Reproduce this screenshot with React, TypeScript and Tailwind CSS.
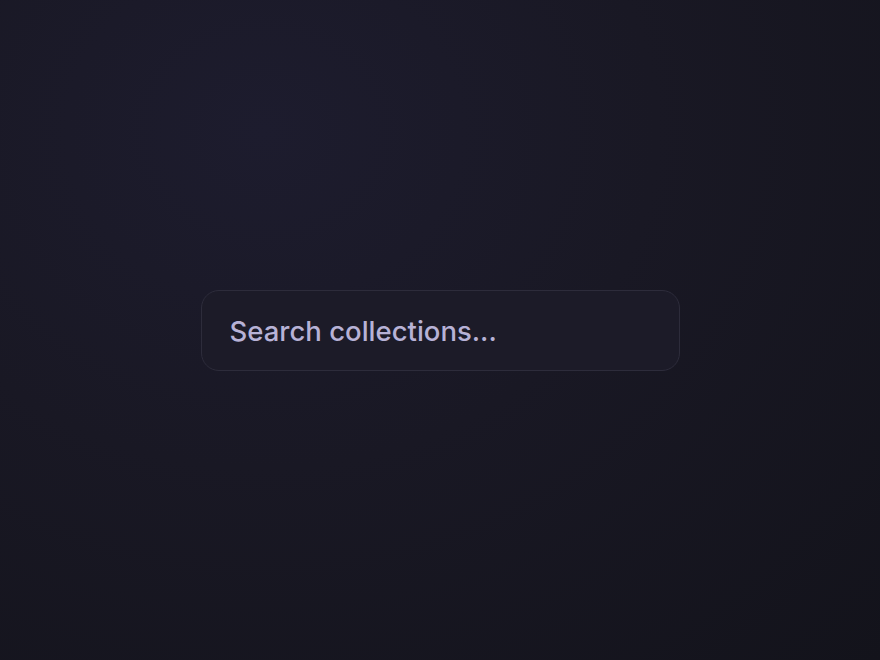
import React, { useState } from 'react';

const App: React.FC = () => {
  const [query, setQuery] = useState('');

  return (
    <div className="flex h-[660px] w-full items-center justify-center bg-[radial-gradient(ellipse_at_30%_20%,#1d1c2e_0%,#191824_45%,#13131b_100%)]">
      <div className="flex h-[81px] w-[479px] items-center rounded-[18px] border border-[#2d2c3b] bg-[#1c1b28] px-7 pt-[3px]">
        <input
          type="text"
          value={query}
          onChange={(e) => setQuery(e.target.value)}
          placeholder="Search collections..."
          className="w-full bg-transparent font-['Inter',sans-serif] text-[27.5px] font-medium text-[#c9c5e4] outline-none placeholder:text-[#b7b2d6]"
        />
      </div>
    </div>
  );
};

export default App;
